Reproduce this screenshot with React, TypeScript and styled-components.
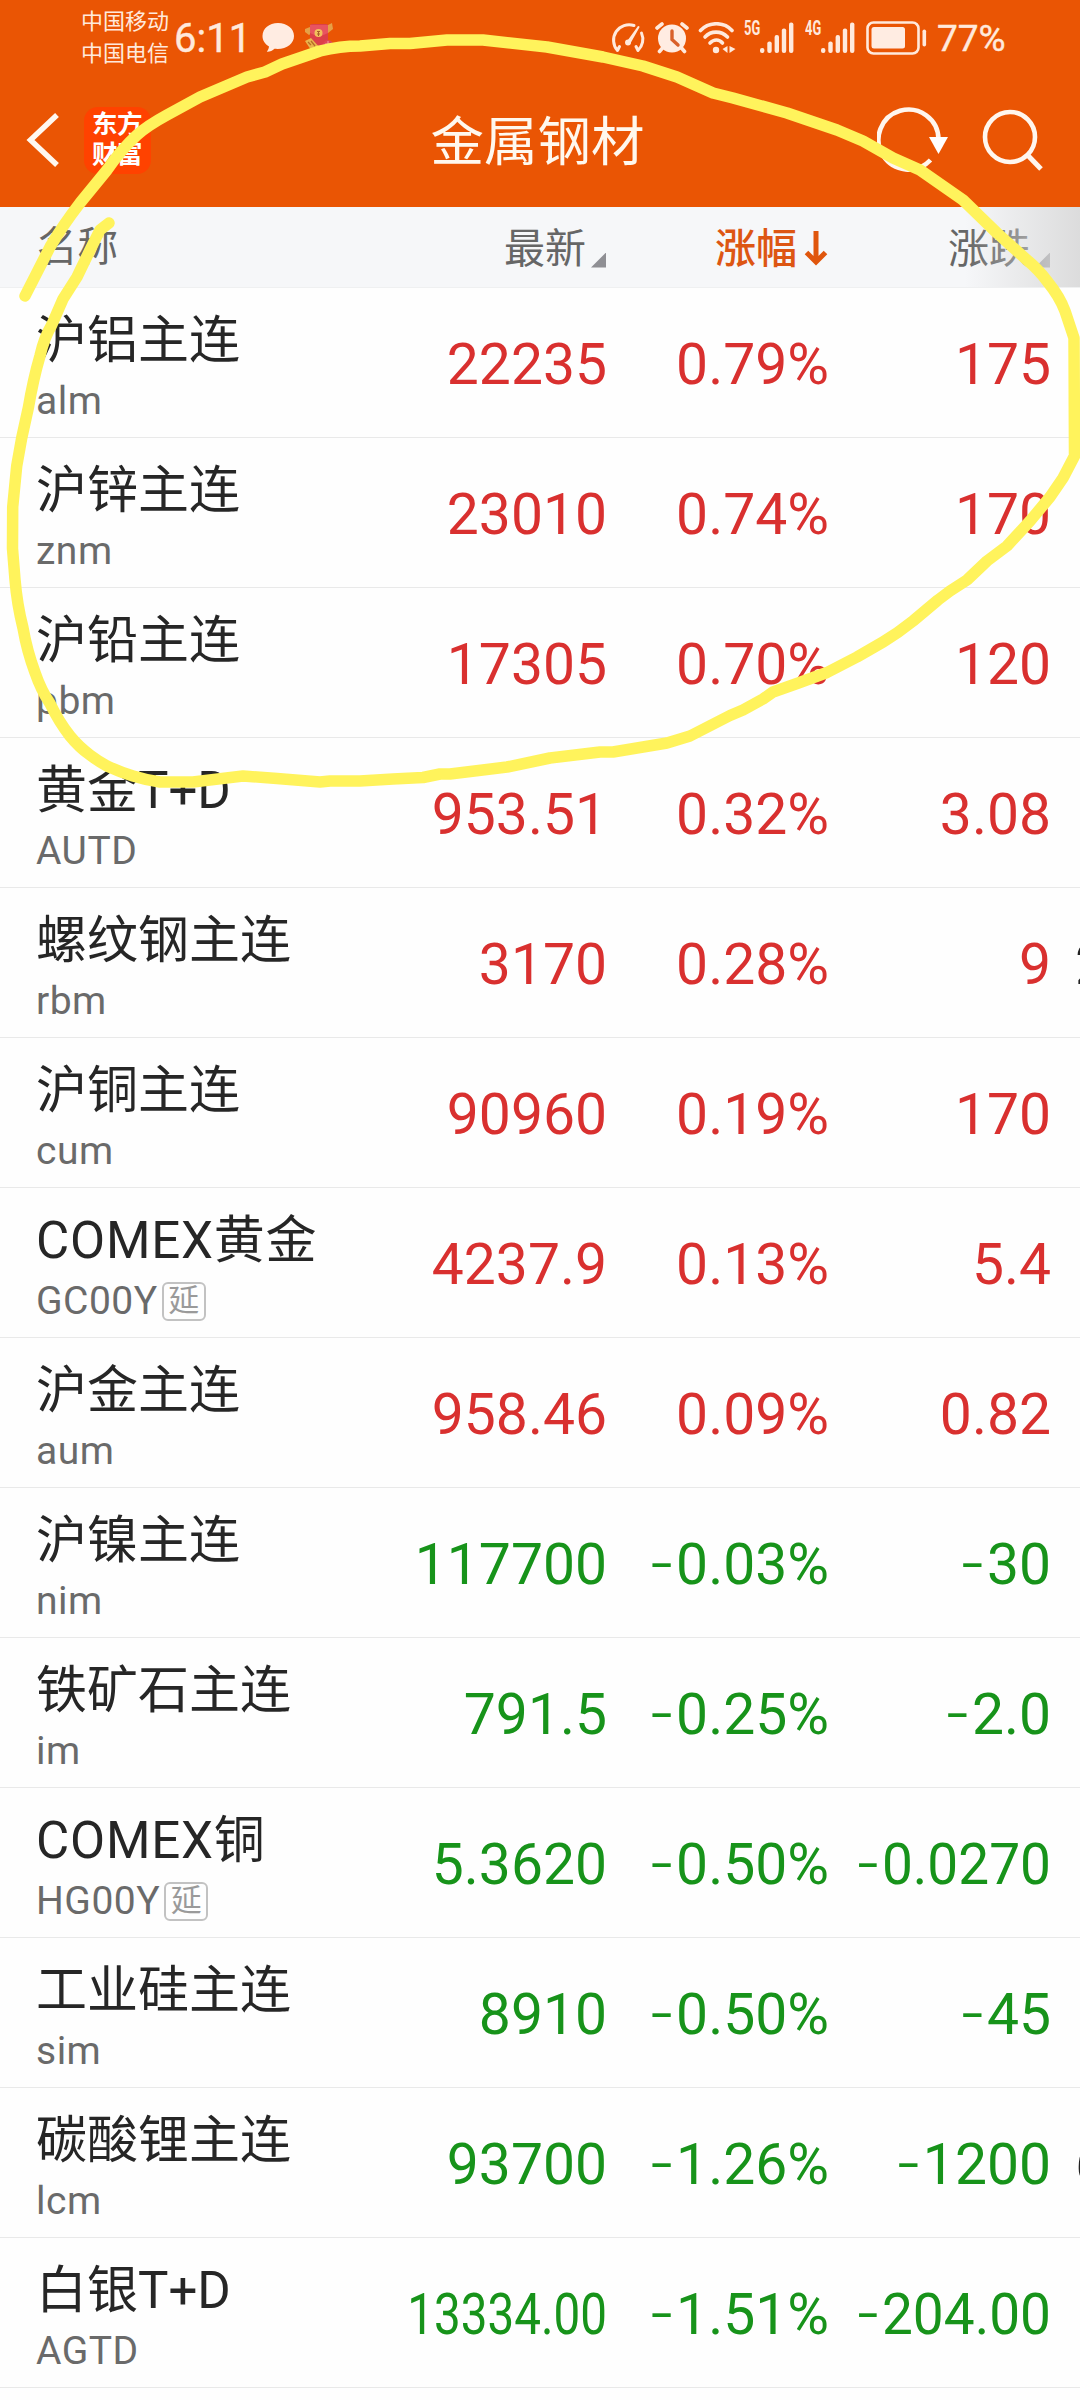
import React from "react";
import styled, { createGlobalStyle } from "styled-components";

const GlobalStyle = createGlobalStyle`
  *, *::before, *::after { box-sizing: border-box; }
  html, body { margin: 0; padding: 0; background: #fefefe; }
  body { font-family: Roboto, "Noto Sans CJK SC", sans-serif; }
`;

const UP = "#d9302f";
const DOWN = "#17931a";
const CREAM = "#ffe9dc";

const Screen = styled.div`
  position: relative;
  width: 1080px;
  height: 2400px;
  overflow: hidden;
  background: #fefefe;
`;

const TopArea = styled.header`
  height: 207px;
  background: #ea5504;
  display: flex;
  flex-direction: column;
`;

const StatusBar = styled.div`
  height: 75px;
  padding: 0 73px 0 81px;
  display: flex;
  align-items: center;
  justify-content: space-between;
  color: ${CREAM};
`;

const StatusGroup = styled.div`
  display: flex;
  align-items: center;
`;

const Carriers = styled.div`
  width: 93px;
  font-size: 22px;
  line-height: 32px;
  white-space: nowrap;
`;

const Clock = styled.div`
  width: 86px;
  font-size: 40px;
  font-weight: 400;
  line-height: 74px;
  padding-top: 2px;
  -webkit-text-stroke: 0.4px ${CREAM};
`;

const BatteryText = styled.div`
  width: 70px;
  margin-left: 9px;
  padding-top: 1px;
  font-size: 37px;
  line-height: 75px;
  font-weight: 400;
  -webkit-text-stroke: 0.4px ${CREAM};
`;

const Glyph = styled.svg<{ $ml?: number }>`
  display: block;
  flex: none;
  margin-left: ${(p) => p.$ml ?? 0}px;
`;

const NetLabel = styled.span<{ $ml: number }>`
  width: 16px;
  margin-left: ${(p) => p.$ml}px;
  padding-bottom: 18px;
  font-size: 19.5px;
  font-weight: 700;
  line-height: 18px;
  white-space: nowrap;
  transform: scaleX(0.66);
  transform-origin: left;
`;

const NavBar = styled.div`
  height: 132px;
  padding: 0 37px 2px 26px;
  display: grid;
  grid-template-columns: 1fr auto 1fr;
  align-items: center;
`;

const NavSide = styled.div<{ $end?: boolean }>`
  display: flex;
  align-items: center;
  justify-content: ${(p) => (p.$end ? "flex-end" : "flex-start")};
`;

const Title = styled.h1`
  margin: 0;
  padding: 6px 0 0 9px;
  width: 226px;
  color: #fff8ee;
  font-size: 53.5px;
  font-weight: 400;
  line-height: 76px;
  white-space: nowrap;
`;

const AppLogo = styled.div`
  width: 67px;
  height: 67px;
  margin-left: 24px;
  padding: 2px 0 0 8px;
  border-radius: 14px;
  background: #ff4200;
  color: #fff;
  font-size: 25.5px;
  font-weight: 700;
  line-height: 30px;
  letter-spacing: -0.6px;
`;

const HeaderRow = styled.div`
  position: relative;
  height: 81px;
  display: grid;
  grid-template-columns: 300px 306px 222px 222px;
  align-items: center;
  background: #f6f7f9;
  border-bottom: 1px solid #eff0f1;
  color: #666;
  font-size: 41px;
  line-height: 60px;
`;

const HeaderName = styled.div`
  padding: 0 0 1px 37px;
  font-size: 40.5px;
`;

const HeaderCell = styled.div<{ $active?: boolean }>`
  padding-top: 4px;
  display: flex;
  justify-content: flex-end;
  align-items: center;
  white-space: nowrap;
  color: ${(p) => (p.$active ? "#dd5613" : "inherit")};
  font-weight: ${(p) => (p.$active ? 500 : 400)};
`;

const SortCorner = styled.span`
  width: 15px;
  height: 15px;
  margin: 22px 0 0 5px;
  background: #8f8f94;
  clip-path: polygon(100% 0, 100% 100%, 0 100%);
`;

const EdgeFade = styled.div`
  position: absolute;
  top: 0;
  right: 0;
  width: 115px;
  height: 80px;
  background: linear-gradient(to right, rgba(220, 220, 220, 0), rgba(217, 217, 217, 0.9));
`;

const Row = styled.div`
  height: 150px;
  display: grid;
  grid-template-columns: 300px 307px 222px 222px 29px;
  border-bottom: 1px solid #e9e9e9;
  overflow: hidden;
`;

const NameCell = styled.div`
  padding: 21px 0 0 36px;
  white-space: nowrap;
`;

const Name = styled.div<{ $wide: boolean }>`
  height: 64px;
  color: #262626;
  font-size: 51px;
  line-height: 64px;
  letter-spacing: ${(p) => (p.$wide ? 0.8 : 0)}px;
`;

const CodeLine = styled.div`
  height: 56px;
  display: flex;
  align-items: center;
  color: #6a6a6a;
  font-size: 39px;
  line-height: 56px;
  letter-spacing: 0.5px;
`;

const DelayTag = styled.span`
  width: 44px;
  height: 39px;
  margin: 1px 0 0 4px;
  border: 2px solid #c2c2c2;
  border-radius: 6px;
  color: #9a9a9a;
  font-size: 31px;
  line-height: 33px;
  letter-spacing: 0;
  text-align: center;
`;

const Value = styled.div<{ $color: string; $squeeze?: number }>`
  color: ${(p) => p.$color};
  font-size: 57px;
  line-height: 153px;
  text-align: right;
  white-space: nowrap;
  transform: scaleX(${(p) => p.$squeeze ?? 1});
  transform-origin: right;
`;

const Minus = styled.span`
  font-family: Inter, sans-serif;
  font-size: 60px;
  font-weight: 300;
  line-height: 1;
  letter-spacing: 1px;
`;

const NextColumn = styled.div`
  padding-left: 24px;
  color: #222;
  font-size: 57px;
  line-height: 153px;
`;

const Annotation = styled.svg`
  position: absolute;
  left: 0;
  top: 0;
  pointer-events: none;
`;

type Quote = {
  name: string;
  code: string;
  last: string;
  pct: string;
  chg: string;
  delayed?: boolean;
  next?: string;
  squeezeLast?: number;
  squeezeChg?: number;
};

const quotes: Quote[] = [
  { name: "沪铝主连", code: "alm", last: "22235", pct: "0.79%", chg: "175" },
  { name: "沪锌主连", code: "znm", last: "23010", pct: "0.74%", chg: "170" },
  { name: "沪铅主连", code: "pbm", last: "17305", pct: "0.70%", chg: "120" },
  { name: "黄金T+D", code: "AUTD", last: "953.51", pct: "0.32%", chg: "3.08" },
  { name: "螺纹钢主连", code: "rbm", last: "3170", pct: "0.28%", chg: "9", next: "2" },
  { name: "沪铜主连", code: "cum", last: "90960", pct: "0.19%", chg: "170" },
  { name: "COMEX黄金", code: "GC00Y", last: "4237.9", pct: "0.13%", chg: "5.4", delayed: true },
  { name: "沪金主连", code: "aum", last: "958.46", pct: "0.09%", chg: "0.82" },
  { name: "沪镍主连", code: "nim", last: "117700", pct: "-0.03%", chg: "-30" },
  { name: "铁矿石主连", code: "im", last: "791.5", pct: "-0.25%", chg: "-2.0" },
  { name: "COMEX铜", code: "HG00Y", last: "5.3620", pct: "-0.50%", chg: "-0.0270", delayed: true, squeezeChg: 0.965 },
  { name: "工业硅主连", code: "sim", last: "8910", pct: "-0.50%", chg: "-45" },
  { name: "碳酸锂主连", code: "lcm", last: "93700", pct: "-1.26%", chg: "-1200", next: "6" },
  { name: "白银T+D", code: "AGTD", last: "13334.00", pct: "-1.51%", chg: "-204.00", squeezeLast: 0.835, squeezeChg: 0.965 },
];

const Signed = ({ text }: { text: string }) =>
  text.startsWith("-") ? (
    <>
      <Minus>-</Minus>
      {text.slice(1)}
    </>
  ) : (
    <>{text}</>
  );

const Signal = () => (
  <Glyph width="34" height="32" viewBox="0 0 34 32" fill={CREAM}>
    <rect x="0" y="26" width="4.4" height="5" rx="2" />
    <rect x="7.3" y="19.5" width="4.4" height="11.5" rx="2" />
    <rect x="14.6" y="13" width="4.4" height="18" rx="2" />
    <rect x="21.8" y="6.5" width="4.4" height="24.5" rx="2" />
    <rect x="29" y="0.5" width="4.4" height="30.5" rx="2" />
  </Glyph>
);

const strokePath =
  "M25 296 L50 247 C60 230 70 216 80 203 L107 170 C116 157 126 145 137 135 C146 127 156 121 167 115 L200 97 L247 77 L265 72 L282 64 L320 51 Q340 46 360 46 L390 43.500 L410 43.500 L447 40 L483 40 L547 47 L603 57 L643 66 L677 77 L713 93 L733 98 L787 113 L837 130 L863 141 L893 158 L920 170 L963 200 L997 233 L1027 260 Q1039 270 1047 281 Q1060 297 1065 311 L1074 338 L1074.500 456 L1063 478 L1050 497 L1030 521 L1007 546 L987 561 L967 580 L950 591 L938 600 L913 621 Q898 633 883 642 L857 657 L827 672.500 L797 683.500 L773 692 L763 699 L743 710 L730 715.500 L690 736 L667 743 L613 752 L600 752 L550 758 L507 767 L450 774 L440 774 L423 777.500 L393 779 L360 781 L330 781 L320 782 L277 778.600 L243 776 L193 782 L160 782 Q146 780 133 776 Q120 772 107 766 Q98 761 90 755 Q79 747 70 736 Q59 722 50 703.500 Q41 690 35 672.500 Q27 651 23 628 Q17 604 15 579.600 L12.500 548.600 L12.700 507 L16.700 466 L21.700 438 L28.500 407 Q33 380 40 355.800 Q44 338 51.700 325 L63 299 L77 277 L90 250 L100 230 L109 223";

export default function App() {
  return (
    <Screen>
      <GlobalStyle />
      <TopArea>
        <StatusBar>
          <StatusGroup>
            <Carriers>
              中国移动
              <br />
              中国电信
            </Carriers>
            <Clock>6:11</Clock>
            <Glyph $ml={1} width="34" height="32" viewBox="0 0 34 32">
              <path
                d="M17 1C8 1 1.500 6.500 1.500 14c0 4.500 2.500 8.200 6.500 10.500-.2 2-1 3.700-2.200 5.300 3 .2 5.500-1 7.700-3C25 28 33 22 33 14 33 6.500 26 1 17 1z"
                fill="#ffece2"
              />
            </Glyph>
            <Glyph $ml={9} width="30" height="30" viewBox="0 0 30 30">
              <path d="M1 6l5-2 3 5-4 3-4-3zM22 3l6-3 1 6-5 4z" fill="#e5a047" />
              <rect x="6" y="1" width="18" height="27" rx="2" fill="#dc3f49" />
              <path d="M6 2h18v8l-9 4-9-4z" fill="#e85460" />
              <circle cx="14.500" cy="10" r="4" fill="#f2c15c" />
              <path d="M13 8.500h3M13 11h3M14.500 8v5" stroke="#a95f2a" strokeWidth="1" />
              <path d="M1 18l6-3 10 11-2 4H9z" fill="#e9b44d" />
              <path d="M4 19l3 3M7 18l4 5M10 24l3 4" stroke="#b66c28" strokeWidth="1.300" />
              <circle cx="24" cy="22" r="5" fill="#e04657" />
              <path d="M21 21h6M22 24h5M24 18v7" stroke="#f3a0a4" strokeWidth="1" />
            </Glyph>
          </StatusGroup>

          <StatusGroup>
            <Glyph width="36" height="32" viewBox="0 0 36 32" fill="none" stroke={CREAM} strokeWidth="3" strokeLinecap="round">
              <path d="M24 3.500A15.500 15.500 0 0 0 7.500 28.500l2-4" strokeLinejoin="round" />
              <path d="M31.500 11A15.500 15.500 0 0 1 28 28.500l-2-4" strokeLinejoin="round" />
              <path d="M18 19.500L28.500 5 19.500 21z" fill={CREAM} strokeWidth="2" strokeLinejoin="round" />
              <circle cx="18" cy="20.500" r="2.200" fill={CREAM} strokeWidth="1.500" />
            </Glyph>
            <Glyph $ml={9} width="34" height="32" viewBox="0 0 34 32">
              <path d="M2 6l5-4M32 6l-5-4M7.500 26L4.500 29.500M26.500 26l3 3.500" stroke={CREAM} strokeWidth="3.600" strokeLinecap="round" />
              <circle cx="17" cy="16.500" r="14" fill="#ffece2" />
              <path d="M17 9v8.500l6 5.500" stroke="#d9602a" strokeWidth="3.400" fill="none" strokeLinecap="round" />
            </Glyph>
            <Glyph $ml={9} width="40" height="32" viewBox="0 0 40 32" fill="none" stroke={CREAM} strokeWidth="3.600" strokeLinecap="round">
              <path d="M2.500 8.500C11-.5 26-.5 34 8.500" />
              <path d="M7 15C13 8.500 23 8.500 29.500 15" />
              <path d="M12 21C16 17 21 17 24.500 21" />
              <circle cx="18" cy="28" r="3.200" fill={CREAM} stroke="none" />
              <path d="M29.500 24v7l-5-4zM31.500 24v7l6-4z" fill={CREAM} stroke="none" />
            </Glyph>
            <NetLabel $ml={6}>5G</NetLabel>
            <Signal />
            <NetLabel $ml={11}>4G</NetLabel>
            <Signal />
            <Glyph $ml={11} width="62" height="34" viewBox="0 0 62 34">
              <rect x="1.500" y="1.500" width="51" height="31" rx="6" fill="none" stroke={CREAM} strokeWidth="2.600" />
              <rect x="5.500" y="6" width="33.500" height="21.500" rx="2.500" fill="#ffece2" />
              <rect x="56.500" y="8.500" width="3.600" height="17" rx="1.800" fill={CREAM} />
            </Glyph>
            <BatteryText>77%</BatteryText>
          </StatusGroup>
        </StatusBar>

        <NavBar>
          <NavSide>
            <Glyph width="34" height="56" viewBox="0 0 34 56">
              <path d="M31 3L4.500 28 31 53" fill="none" stroke="#fff8f0" strokeWidth="5.500" />
            </Glyph>
            <AppLogo>
              东方
              <br />
              财富
            </AppLogo>
          </NavSide>
          <Title>金属钢材</Title>
          <NavSide $end>
            <Glyph width="72" height="66" viewBox="0 0 72 66">
              <path d="M61.500 32A30 30 0 1 0 53.500 53" fill="none" stroke="#fff6ee" strokeWidth="4.600" />
              <path d="M52 30h19L61.500 47z" fill="#fff" />
            </Glyph>
            <Glyph $ml={32} width="62" height="64" viewBox="0 0 62 64" fill="none" stroke="#fff6ee">
              <circle cx="29" cy="29" r="25" strokeWidth="4.600" />
              <path d="M46 46.500L60 61" strokeWidth="5" />
            </Glyph>
          </NavSide>
        </NavBar>
      </TopArea>

      <HeaderRow>
        <HeaderName>名称</HeaderName>
        <HeaderCell>
          最新
          <SortCorner />
        </HeaderCell>
        <HeaderCell $active>
          涨幅
          <Glyph $ml={7} width="24" height="38" viewBox="0 0 24 38">
            <path d="M12 1v31M2.500 22.500L12 32l9.500-9.500" fill="none" stroke="#e0560d" strokeWidth="5" />
          </Glyph>
        </HeaderCell>
        <HeaderCell>
          涨跌
          <SortCorner />
        </HeaderCell>
        <EdgeFade />
      </HeaderRow>

      {quotes.map((q) => {
        const color = q.pct.startsWith("-") ? DOWN : UP;
        return (
          <Row key={q.code}>
            <NameCell>
              <Name $wide={q.name.startsWith("COMEX")}>{q.name}</Name>
              <CodeLine>
                {q.code}
                {q.delayed && <DelayTag>延</DelayTag>}
              </CodeLine>
            </NameCell>
            <Value $color={color} $squeeze={q.squeezeLast}>
              <Signed text={q.last} />
            </Value>
            <Value $color={color}>
              <Signed text={q.pct} />
            </Value>
            <Value $color={color} $squeeze={q.squeezeChg}>
              <Signed text={q.chg} />
            </Value>
            {q.next && <NextColumn>{q.next}</NextColumn>}
          </Row>
        );
      })}

      <Annotation width="1080" height="820" viewBox="0 0 1080 820">
        <path d={strokePath} fill="none" stroke="#fff35c" strokeWidth="11.500" strokeLinecap="round" strokeLinejoin="round" />
      </Annotation>
    </Screen>
  );
}
